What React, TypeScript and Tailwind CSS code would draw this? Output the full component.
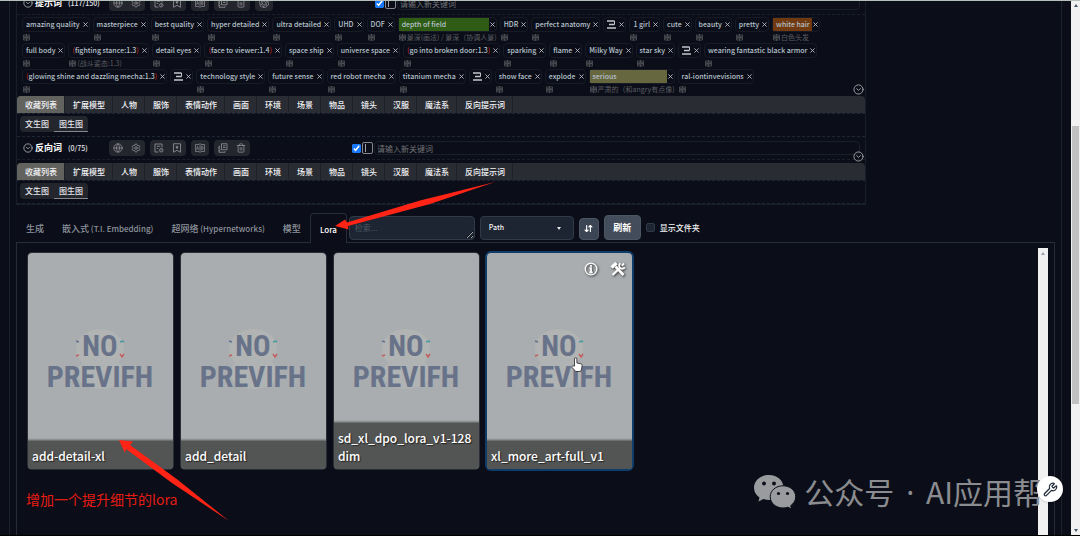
import type { ReactNode } from "react";
import { ArrowDownUp, CircleChevronDown, Globe, Settings, Trash2, Wrench } from "lucide-react";
import { SiOpenai } from "react-icons/si";

type Tag = {
  text: string;
  weight?: boolean;
  wrap?: boolean;
  color?: string;
  note?: string;
};

const tags: Tag[] = [
  { text: "amazing quality" },
  { text: "masterpiece" },
  { text: "best quality" },
  { text: "hyper detailed" },
  { text: "ultra detailed" },
  { text: "UHD" },
  { text: "DOF" },
  { text: "depth of field", color: "bg-[#2f5c14]", note: "景深(画法) / 景深（协调人景)" },
  { text: "HDR" },
  { text: "perfect anatomy" },
  { text: "", wrap: true },
  { text: "1 girl" },
  { text: "cute" },
  { text: "beauty" },
  { text: "pretty" },
  { text: "white hair", color: "bg-[#70390f]", note: "白色头发" },
  { text: "full body" },
  { text: "fighting stance:1.3", weight: true, note: "(战斗姿态:1.3)" },
  { text: "detail eyes" },
  { text: "face to viewer:1.4", weight: true },
  { text: "space ship" },
  { text: "universe space" },
  { text: "go into broken door:1.3", weight: true },
  { text: "sparking" },
  { text: "flame" },
  { text: "Milky Way" },
  { text: "star sky" },
  { text: "", wrap: true },
  { text: "wearing fantastic black armor" },
  { text: "glowing shine and dazzling mecha:1.3", weight: true },
  { text: "", wrap: true },
  { text: "technology style" },
  { text: "future sense" },
  { text: "red robot mecha" },
  { text: "titanium mecha" },
  { text: "", wrap: true },
  { text: "show face" },
  { text: "explode" },
  { text: "serious", color: "bg-[#67673f]", note: "严肃的（和angry有点像)" },
  { text: "ral-iontinvevisions" },
];

const groups = [
  "收藏列表",
  "扩展模型",
  "人物",
  "服饰",
  "表情动作",
  "画面",
  "环境",
  "场景",
  "物品",
  "镜头",
  "汉服",
  "魔法系",
  "反向提示词",
];

const networkTabs = [
  { name: "生成" },
  { name: "嵌入式", latin: "(T.I. Embedding)" },
  { name: "超网络", latin: "(Hypernetworks)" },
  { name: "模型" },
];

const cards = ["add-detail-xl", "add_detail", "sd_xl_dpo_lora_v1-128dim", "xl_more_art-full_v1"];

function ToolIcon({ children }: { children: ReactNode }) {
  return (
    <svg viewBox="0 0 20 20" className="size-[10px]" fill="none" stroke="currentColor" strokeWidth="1.800">
      {children}
    </svg>
  );
}

function HistoryIcon() {
  return (
    <ToolIcon>
      <path d="M9 18H2V2h14v7M5.500 6.500h7M5.500 11h3" />
      <circle cx="14.500" cy="14.500" r="3.500" />
      <path d="M14.500 12.500v2.500h1.500" strokeWidth="1.200" />
    </ToolIcon>
  );
}

function FavoriteIcon() {
  return (
    <ToolIcon>
      <path d="M3 1.500h14v17l-7-4-7 4z" />
      <path d="M10 4.500l1.200 2.500 2.500.3-1.900 1.800.5 2.600L10 10.500l-2.300 1.200.5-2.600-1.900-1.800 2.500-.3z" fill="currentColor" strokeWidth="0" />
    </ToolIcon>
  );
}

function AbIcon() {
  return (
    <ToolIcon>
      <path d="M8 3H1v14h7M12 3h7v14h-7M10 0v20" strokeWidth="1.500" />
      <path d="M3 13.500 5.200 6.500l2.200 7M3.800 11.500h2.800M12.500 6.500v7h2q2 0 2-1.800T14.500 10q1.700 0 1.700-1.700T14.500 6.500zM12.500 10h2" strokeWidth="1.300" />
    </ToolIcon>
  );
}

function CopyIcon() {
  return (
    <ToolIcon>
      <path d="M7 1.500h11v12H7zM10 5.500h5M10 9h5" />
      <path d="M4 6.500H2v12h12v-2M1 10h3M5 13.500 2 16" />
    </ToolIcon>
  );
}

function TranslateIcon() {
  return (
    <svg viewBox="0 0 14 14" className="size-[7px] shrink-0 text-[#5b5d63]" fill="none" stroke="currentColor">
      <path d="M1 2h12v10H1zM7 0v14M3 5h2v4H3zM9 9V5h2v4M9 7h2" strokeWidth="1.400" />
    </svg>
  );
}

function WrapIcon() {
  return (
    <svg viewBox="0 0 9 9" className="size-[9px]" fill="none" stroke="#c3c6cb" strokeWidth="1.500">
      <path d="M0 1h7.500M2 4.500h5.500M0 8h9" />
      <path d="M7.500 1v3.500" strokeWidth="1" />
    </svg>
  );
}

function TagItem({ tag }: { tag: Tag }) {
  return (
    <li className="flex h-[26px] flex-col">
      <div className="flex h-[15px] items-stretch justify-between rounded-sm border border-[#171b26]">
        <span className={`flex grow items-center pr-[2px] pl-[3px] whitespace-pre ${tag.color ?? ""}`}>
          {tag.weight && <span className="text-[#b3201c]">(</span>}
          {tag.wrap ? <WrapIcon /> : tag.text}
          {tag.weight && <span className="text-[#b3201c]">)</span>}
        </span>
        <button type="button" aria-label={`Remove ${tag.text}`} className="flex w-[7px] items-center justify-center">
          <svg viewBox="0 0 6 6" className="size-[5px]" stroke="#c3c6cb" strokeWidth="1">
            <path d="M.5.5l5 5M5.500.5l-5 5" />
          </svg>
        </button>
      </div>
      {!tag.wrap && (
        <div className="flex h-[10px] items-center gap-px pl-px text-[7px] leading-none font-normal whitespace-nowrap text-[#5b5d63]">
          <TranslateIcon />
          {tag.note}
        </div>
      )}
    </li>
  );
}

function ToolGroup({ items }: { items: [string, ReactNode][] }) {
  return (
    <div className="flex h-4 rounded-sm bg-[#24262d] text-[#8a8b90]">
      {items.map(([label, icon]) => (
        <button key={label} type="button" aria-label={label} className="flex w-[18px] items-center justify-center">
          {icon}
        </button>
      ))}
    </div>
  );
}

function PromptHeader({ title, count, ai }: { title: string; count: string; ai?: boolean }) {
  return (
    <div className="flex h-[23px] items-center border-b border-dashed border-[#1a1f2a] pr-[5px] pl-[6px]">
      <div className="flex w-[86px] shrink-0 items-center">
        <CircleChevronDown size={10} className="mr-[2px] text-[#b0b2b6]" />
        <h2 className="mr-[6px] text-[9px] font-bold text-white">{title}</h2>
        <span className="text-[7px] font-medium text-gray-200">({count})</span>
      </div>
      <div className="flex shrink-0 gap-[5px]">
        <ToolGroup items={[["语言", <Globe size={10} />], ["设置", <Settings size={10} />]]} />
        <ToolGroup items={[["历史", <HistoryIcon />], ["收藏", <FavoriteIcon />]]} />
        <ToolGroup items={[["翻译", <AbIcon />]]} />
        <ToolGroup items={[["复制", <CopyIcon />], ["删除", <Trash2 size={10} />]]} />
        {ai && <ToolGroup items={[["ChatGPT", <SiOpenai size={10} />]]} />}
      </div>
      <input
        type="checkbox"
        defaultChecked
        aria-label={`${title}自动`}
        className="ml-[102px] size-[9px] shrink-0 accent-[#1677ff]"
      />
      <button
        type="button"
        aria-label="追加"
        className="ml-px flex h-[12px] w-[11px] shrink-0 items-center rounded-xs border border-[#85878c] pl-[2px]"
      >
        <span className="h-2 w-px bg-[#a0a2a6]" />
      </button>
      <input
        type="text"
        aria-label={title}
        placeholder="请输入新关键词"
        className="ml-px h-[14px] min-w-0 grow rounded-sm border border-[#1a1e29] px-[2px] text-[8px] placeholder:text-[#707276]"
      />
    </div>
  );
}

function GroupTabs() {
  return (
    <div className="relative">
      <button type="button" aria-label="展开" className="absolute -top-3 right-px text-[#a5a7ab]">
        <CircleChevronDown size={11} />
      </button>
      <div className="flex h-[17px] overflow-hidden rounded-t-sm bg-[#2a2c33]">
        {groups.map((name, i) => (
          <button
            key={name}
            type="button"
            className={`border-r border-[#1f2127] pr-[7px] pl-2 text-[8px] font-medium whitespace-nowrap text-gray-100 ${
              i === 0 ? "bg-[#62625f]" : ""
            }`}
          >
            {name}
          </button>
        ))}
      </div>
      <div className="h-6 border-y border-dashed border-[#1e2733] pt-[2px] pl-[3px]">
        <div className="flex h-[16px] w-fit rounded-sm bg-[#24262d] text-[8px] font-medium text-gray-200">
          <button type="button" className="px-[5px]">
            文生图
          </button>
          <button type="button" className="border-b border-[#85878c] px-[5px]">
            图生图
          </button>
        </div>
      </div>
    </div>
  );
}

function LoraCard({ name, active }: { name: string; active: boolean }) {
  return (
    <article
      className={`relative flex h-[216px] w-[145px] shrink-0 flex-col justify-end overflow-hidden rounded-sm bg-[#a9adaf] ${
        active ? "ring-2 ring-[#0e3c6b]" : "ring-1 ring-[#2b2f36]"
      }`}
    >
      <NoPreview />
      {active && (
        <div className="absolute top-2 right-1.5 flex items-center gap-3">
          <button type="button" aria-label="Info">
            <svg viewBox="0 0 14 14" className="size-[14px] drop-shadow-[1px_1px_1px_#333]" fill="none" stroke="white">
              <circle cx="7" cy="7" r="5.800" strokeWidth="1.300" />
              <path d="M7 3v1.800M5.500 6.200H7V10.500M5.300 10.500h3.400" strokeWidth="1.800" />
            </svg>
          </button>
          <button type="button" aria-label="Edit">
            <svg viewBox="0 0 16 16" className="size-4 drop-shadow-[1px_1px_1px_#333]" fill="none" stroke="white">
              <path d="M5.500 5.500l8 8.500" strokeWidth="2.600" />
              <path d="M1.500 6.500 6.500 2" strokeWidth="3.400" />
              <path d="M2.500 14 10.500 6.500" strokeWidth="2.200" />
              <path d="M14 2.500 11.800 4.700M10.500 2.200a3 3 0 1 0 4.200 4" strokeWidth="1.800" />
            </svg>
          </button>
        </div>
      )}
      <div className="relative bg-[#535554] px-1 pt-[6px] pb-1 shadow-[0_0_2px_1px_#535554]">
        <h3 className="text-[12px] leading-[18px] font-medium break-all text-white [text-shadow:1px_1px_1px_#222]">
          {name}
        </h3>
      </div>
    </article>
  );
}

function NoPreview() {
  return (
    <svg viewBox="0 0 145 216" className="absolute inset-0 size-full" role="img" aria-label="NO PREVIEW">
      <ellipse cx="72" cy="96" rx="24" ry="20" fill="#b1b4b3" />
      <ellipse cx="73" cy="120" rx="24" ry="16" fill="#b0b3b3" />
      <g
        fontFamily="'Liberation Sans Narrow', 'Roboto Condensed', 'Open Sans Condensed', 'Noto Sans CJK SC', sans-serif"
        fontWeight="700"
        fill="#68738a"
        textAnchor="middle"
      >
        <text x="72" y="103" fontSize="29">
          NO
        </text>
        <text x="72" y="134" fontSize="30">
          PREVIFH
        </text>
      </g>
      <g fill="none" strokeWidth="1.500">
        <path d="M48 88l3 1" stroke="#5f7391" />
        <path d="M92 89l3-1 1 1" stroke="#469a9c" />
        <path d="M48 103l3-1M92 101l2 3 2-3" stroke="#c25f5c" />
      </g>
    </svg>
  );
}

function LoraToolbar() {
  return (
    <div className="flex h-[29px] items-center">
      <div role="tablist" className="flex h-full shrink-0 pl-px text-[9px] font-medium text-[#8d929c]">
        {networkTabs.map(({ name, latin }) => (
          <button key={name} type="button" role="tab" className="px-[9px] pt-[2px] whitespace-nowrap">
            {name}
            {latin && <span className="text-[8px]"> {latin}</span>}
          </button>
        ))}
        <button
          type="button"
          role="tab"
          aria-selected="true"
          className="relative -mb-px rounded-t border border-b-0 border-[#262d39] bg-[#0b0e18] px-[9px] pt-[2px] text-[8px] text-white"
        >
          Lora
        </button>
      </div>
      <textarea
        aria-label="检索"
        placeholder="检索..."
        className="ml-[2px] h-6 w-[126px] rounded border border-[#2f3947] bg-[#1c2531] px-[5px] pt-[5px] text-[8px] placeholder:text-[#4e5866]"
      />
      <div className="relative ml-[5px]">
        <select
          aria-label="排序"
          className="block h-6 w-[94px] appearance-none rounded border border-[#2f3947] bg-[#1c2531] px-2 text-[7px] font-medium text-gray-100"
        >
          <option>Path</option>
        </select>
        <span className="pointer-events-none absolute top-[11px] right-[13px] border-x-2 border-t-[3px] border-x-transparent border-t-gray-200" />
      </div>
      <button
        type="button"
        aria-label="切换排序"
        className="mt-[2px] ml-[5px] flex h-[22px] w-5 items-center justify-center rounded border border-[#4b5563] bg-[#3c4553] text-white"
      >
        <ArrowDownUp size={9} strokeWidth={3} />
      </button>
      <button
        type="button"
        className="ml-[5px] h-[25px] w-[37px] rounded border border-[#4b5563] bg-[#434c5a] text-[9px] font-bold text-white"
      >
        刷新
      </button>
      <label className="ml-[5px] flex items-center gap-[5px] text-[8px] font-medium whitespace-nowrap text-gray-100">
        <input
          type="checkbox"
          className="size-[9px] appearance-none rounded-xs border border-[#2f3947] bg-[#1c2531]"
        />
        显示文件夹
      </label>
    </div>
  );
}

function PageScrollbar() {
  return (
    <div className="flex w-[9px] shrink-0 flex-col items-center bg-[#f1f1f1] py-1">
      <span className="border-x-2 border-b-[3px] border-x-transparent border-b-gray-600" />
      <div className="flex w-full flex-1 flex-col py-1">
        <div className="flex-[115]" />
        <div className="mx-px flex-[278] bg-[#c1c1c1]" />
        <div className="flex-[121]" />
      </div>
      <span className="border-x-2 border-t-[3px] border-x-transparent border-t-gray-600" />
    </div>
  );
}

function Annotations() {
  return (
    <>
      <svg className="pointer-events-none absolute top-0 left-0 h-[536px] w-[640px]" fill="#ff2415">
        <path d="M335 226 345 219.500 347 222.500 420 200.500 495 182 430 204 348 226 348.500 229.500z" />
        <path d="M119 440 133 441.500 130 445 178 480 229 521 172 483 126 449 125 453z" />
      </svg>
      <p className="absolute top-[489px] left-[26px] text-[14px] leading-5 text-[#e71b12]">
        增加一个提升细节的lora
      </p>
      <svg viewBox="0 0 12 16" className="absolute top-[357px] left-[571px] h-4 w-3">
        <path
          d="M3.500 9V2a1.200 1.200 0 0 1 2.400 0v4l4 .8q1.300.4 1.200 1.800l-.5 3.400-1 2.500H4.800L1 10.500q-.6-1.300.6-1.500z"
          fill="white"
          stroke="#222"
          strokeWidth=".8"
        />
      </svg>
    </>
  );
}

function Watermark() {
  return (
    <div className="absolute right-[37px] bottom-[25px] flex items-center gap-2 text-[#8b8c90]">
      <svg viewBox="0 0 42 34" className="h-[34px] w-[42px]">
        <path
          d="M15 0C6.500 0 0 5.500 0 12.800c0 4 2 7.400 5.500 9.800L4.500 26.500l5-2.400q3 1 6.500.9C24 25 29.500 19.500 29.500 12.800 29.500 5.500 23.500 0 15 0z"
          fill="#9a9b9e"
        />
        <path
          d="M29 10.800c-7.200 0-12.800 4.800-12.800 11S21.800 33 29 33q2.600 0 5-.8l3.700 2-1-3.500c3-2.100 5-5.200 5-8.900 0-6.200-5.500-11-12.700-11z"
          fill="#9a9b9e"
          stroke="#0b0e18"
          strokeWidth="1"
        />
        <g fill="#0b0e18">
          <circle cx="10" cy="8.500" r="1.900" />
          <circle cx="20" cy="8.500" r="1.900" />
          <circle cx="24.500" cy="18.500" r="1.600" />
          <circle cx="33.500" cy="18.500" r="1.600" />
        </g>
      </svg>
      <span className="text-[30px] leading-9 whitespace-nowrap">
        公众号<span className="mx-1 font-['Noto_Sans'] font-normal"> · </span>AI应用帮
      </span>
    </div>
  );
}

export default function App() {
  return (
    <div className="relative flex h-screen overflow-hidden bg-[#0b0e18] font-['Noto_Sans_CJK_SC',sans-serif] text-gray-300">
      <main className="ml-[9px] flex min-w-0 flex-1 flex-col border-x border-[#1b222d] px-[6px]">
        <div className="flex min-h-0 flex-1 flex-col">
          <div className="-mt-2 w-[850px] max-w-full border border-t-0 border-[#181e29]">
            <section>
              <PromptHeader title="提示词" count="117/150" ai />
              <ul className="flex min-h-[81px] flex-wrap content-start gap-x-[3px] pt-[2px] pr-3 pl-[5px] text-[7px] font-medium text-[#b6c2cc]">
                {tags.map((tag, i) => (
                  <TagItem key={i} tag={tag} />
                ))}
              </ul>
              <GroupTabs />
            </section>
            <section>
              <PromptHeader title="反向词" count="0/75" />
              <div className="pt-[3px]">
                <GroupTabs />
              </div>
            </section>
          </div>

          <section className="mt-2 flex min-h-0 flex-1 flex-col">
            <LoraToolbar />
            <div className="flex min-h-0 flex-1 border border-b-0 border-[#262d39] pt-[5px] pr-[6px] pl-[11px]">
              <div className="flex flex-1 gap-2 pt-[5px]">
                {cards.map((name, i) => (
                  <LoraCard key={name} name={name} active={i === 3} />
                ))}
              </div>
              <div className="flex w-[10px] flex-col items-center bg-[#f1f1f1] pt-1">
                <span className="border-x-2 border-b-[3px] border-x-transparent border-b-gray-400" />
              </div>
            </div>
          </section>
        </div>
      </main>
      <div className="w-[9px] shrink-0" />
      <PageScrollbar />

      <div className="absolute inset-x-0 top-0 h-px bg-[#b5c0bd]" />
      <Annotations />
      <Watermark />
      <button
        type="button"
        aria-label="工具"
        className="absolute right-[17px] bottom-[34px] flex size-[26px] items-center justify-center rounded-full bg-white text-gray-800 shadow"
      >
        <Wrench size={15} />
      </button>
      <div className="absolute inset-x-0 bottom-0 h-px bg-black" />
    </div>
  );
}
